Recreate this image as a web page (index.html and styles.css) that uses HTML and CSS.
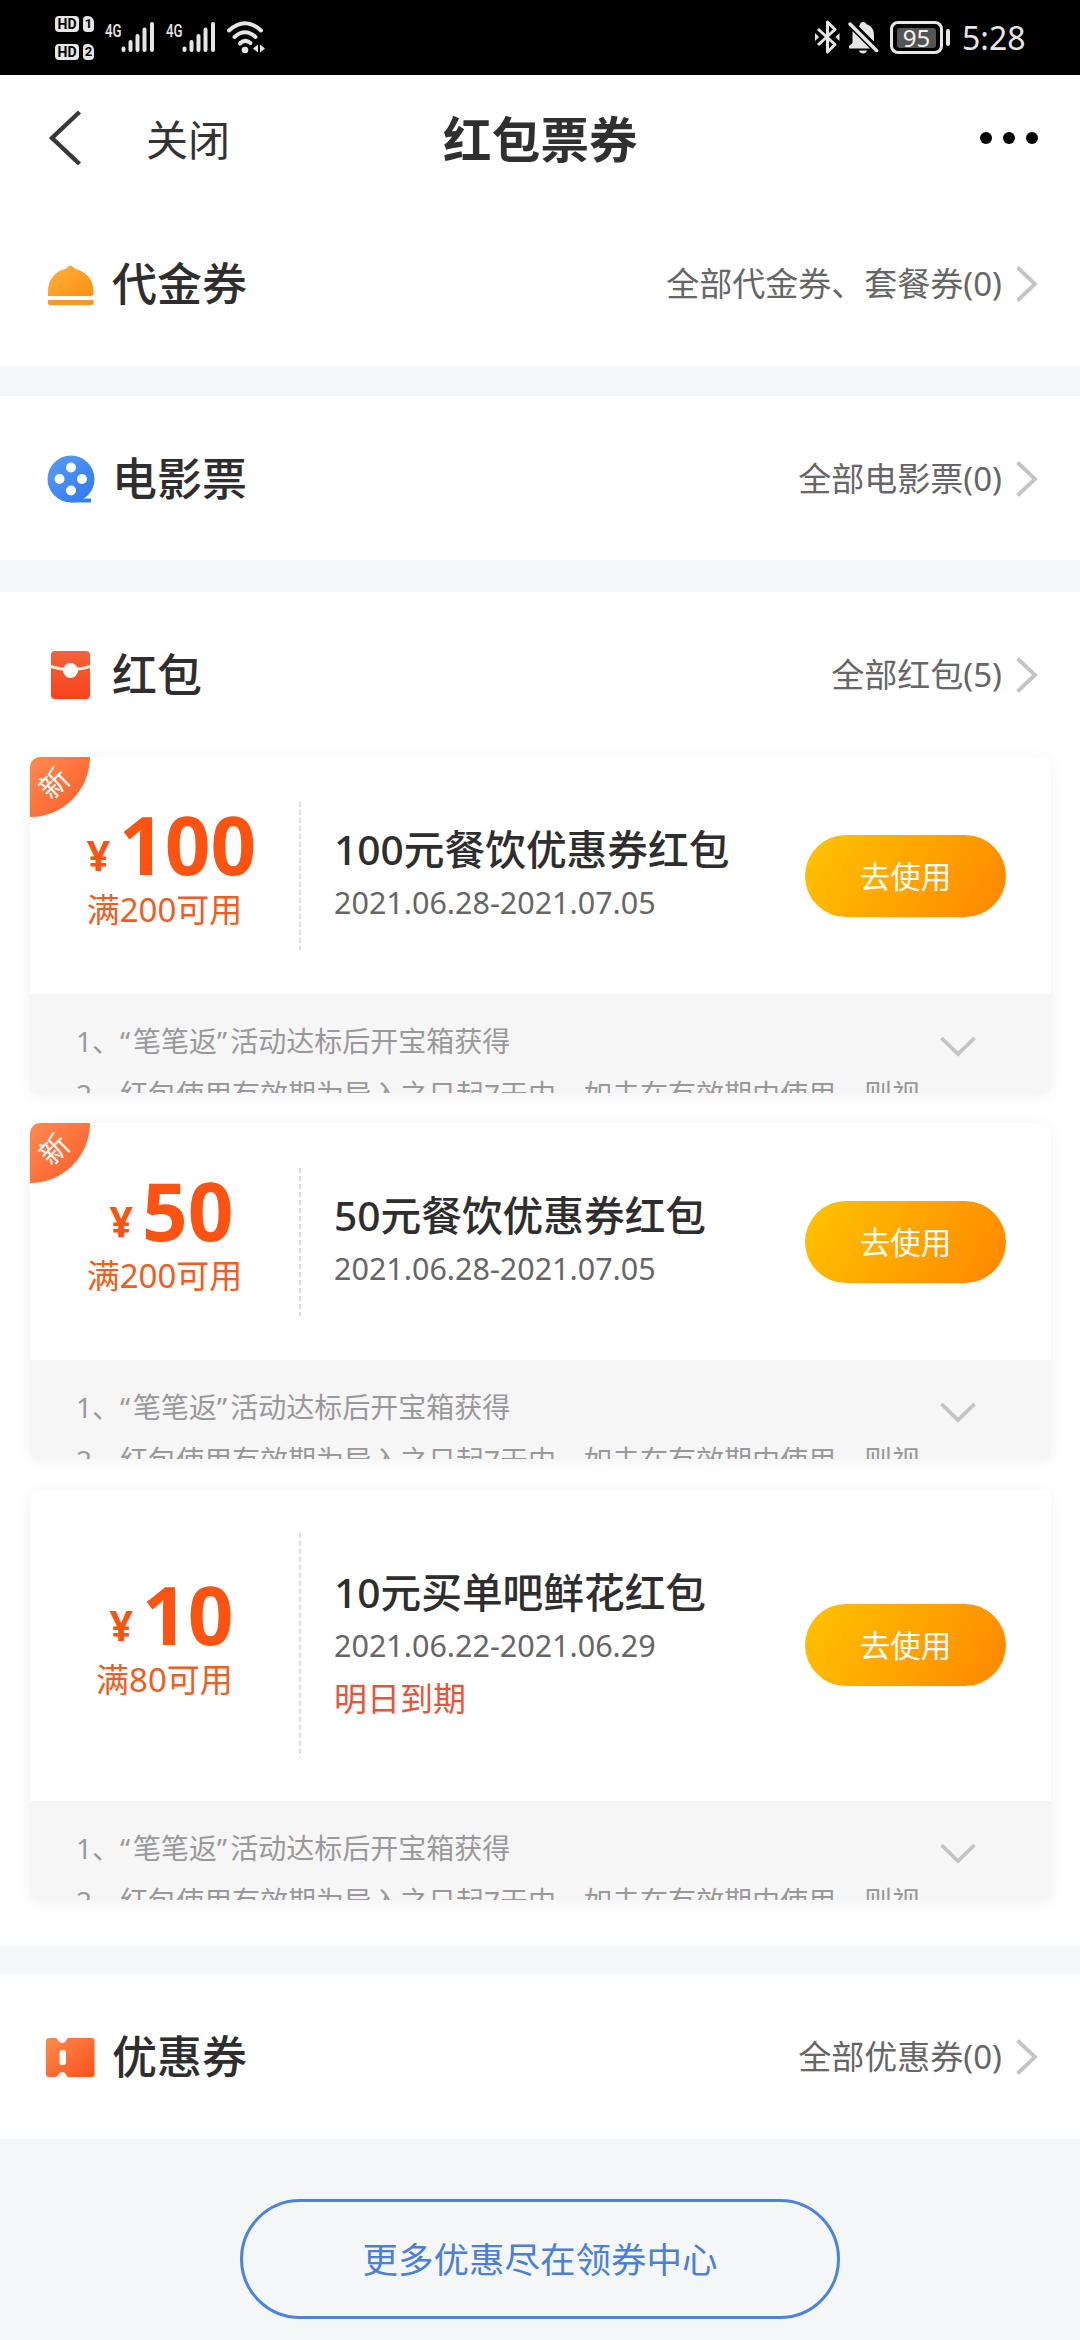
FILE: index.html
```html
<!DOCTYPE html>
<html lang="zh-CN">
<head>
<meta charset="utf-8">
<title>红包票券</title>
<link rel="stylesheet" href="styles.css">
</head>
<body>
<svg class="defs" width="0" height="0" aria-hidden="true">
  <defs>
    <linearGradient id="gold" x1="0" y1="0" x2="1" y2="1"><stop offset="0" stop-color="#ffb13d"/><stop offset="1" stop-color="#fb9010"/></linearGradient>
    <linearGradient id="blue" x1="0" y1="0" x2="1" y2="1"><stop offset="0" stop-color="#5a9cf8"/><stop offset="1" stop-color="#2b78ee"/></linearGradient>
    <linearGradient id="red" x1="0" y1="0" x2="0" y2="1"><stop offset="0" stop-color="#f4623c"/><stop offset="1" stop-color="#fa421a"/></linearGradient>
    <linearGradient id="orange" x1="0" y1="0" x2="1" y2="1"><stop offset="0" stop-color="#ff8b4a"/><stop offset="1" stop-color="#f9501f"/></linearGradient>
    <symbol id="chevron" viewBox="0 0 22 36"><path d="M1.5 1.5 19 18 1.5 34.500" fill="none" stroke="#c4c4c4" stroke-width="3.800"/></symbol>
    <symbol id="expand" viewBox="0 0 36 22"><path d="M1.500 2 18 18 34.500 2" fill="none" stroke="#c4c4c4" stroke-width="3.800"/></symbol>
    <symbol id="signal" viewBox="0 0 34 32"><path d="M2.500 27.500v1.500M9.500 21v8M16.500 15v14M23.500 8.500V29M31 3v26" fill="none" stroke="#e6e6e6" stroke-width="4" stroke-linecap="round"/></symbol>
  </defs>
</svg>

<header class="status">
  <div class="sims">
    <div class="sim"><span class="hd">HD</span><span class="slot">1</span></div>
    <div class="sim"><span class="hd">HD</span><span class="slot">2</span></div>
  </div>
  <div class="net"><span class="gen">4G</span><svg width="34" height="32"><use href="#signal"/></svg></div>
  <div class="net"><span class="gen">4G</span><svg width="34" height="32"><use href="#signal"/></svg></div>
  <svg class="wifi" width="39" height="33" viewBox="0 0 39 33">
    <g fill="none" stroke="#e6e6e6" stroke-width="4" stroke-linecap="round"><path d="M2 9.500Q18 -5 34 9.500"/><path d="M7.500 16Q18 6.500 28.500 16"/><path d="M13 22.500Q18 17.500 23.500 22"/></g>
    <circle cx="18" cy="29" r="3.300" fill="#e6e6e6"/><path d="M31 23.500v8l-5-4zM33 23.500v8l5-4z" fill="#e6e6e6"/>
  </svg>
  <div class="status-right">
    <svg width="25" height="36" viewBox="0 0 25 36"><path d="M3 10 20 25.500 12.500 33V3L20 10.500 3 26" fill="none" stroke="#e6e6e6" stroke-width="3" stroke-linejoin="round"/><path d="M0 14v8l4-4zM24.500 14v8l-4-4z" fill="#e6e6e6"/></svg>
    <svg class="bell" width="31" height="34" viewBox="0 0 31 34"><path d="M15 1c2 0 3 1 3.500 2.200C24 5 26 9 26 14v6.500L11 5.500C12 4 12 1 15 1zM4.500 10 22 27.500H1v-2.500l3.500-3z" fill="#e6e6e6"/><path d="M11 29.500h8c-.5 4-7.500 4-8 0z" fill="#e6e6e6"/><path d="M2 3 28.500 29.500" stroke="#e6e6e6" stroke-width="3.500" stroke-linecap="round"/></svg>
    <div class="battery"><span class="charge">95</span></div>
    <time class="clock">5:28</time>
  </div>
</header>

<nav class="nav">
  <svg class="back" width="33" height="56" viewBox="0 0 33 56"><path d="M30.500 2 3 28 30.500 54" fill="none" stroke="#383838" stroke-width="4.400"/></svg>
  <span class="close">关闭</span>
  <h1 class="title">红包票券</h1>
  <div class="more"><i></i><i></i><i></i></div>
</nav>

<main>
  <section class="group">
    <div class="row">
      <svg class="icon" width="48" height="48" viewBox="0 0 48 48"><path d="M1 36v-5C1 20 8 11 18 9c2-.5 3-3.500 5.500-3.500S27 8.500 29 9C39 11.500 46.500 20 46.500 31v2q0 3-3 3z" fill="url(#gold)"/><path d="M1 40h45.500v3q0 2-2 2H3q-2 0-2-2z" fill="#f39a2a"/></svg>
      <h2>代金券</h2><span class="all">全部代金券、套餐券(0)</span><svg width="22" height="36"><use href="#chevron"/></svg>
    </div>
  </section>

  <section class="group movies">
    <div class="row">
      <svg class="icon" width="48" height="48" viewBox="0 0 48 48"><circle cx="24" cy="24" r="23.500" fill="url(#blue)"/><path d="M24 43.500h20v4H24z" fill="#3a80ea"/><g fill="#fff"><circle cx="24" cy="12.500" r="5"/><circle cx="24" cy="35.500" r="5"/><circle cx="12.500" cy="24" r="5"/><circle cx="35" cy="24" r="5"/></g></svg>
      <h2>电影票</h2><span class="all">全部电影票(0)</span><svg width="22" height="36"><use href="#chevron"/></svg>
    </div>
  </section>

  <section class="group packets">
    <div class="row">
      <svg class="icon" width="48" height="48" viewBox="0 0 48 48"><rect x="4" width="39" height="48" rx="4" fill="url(#red)"/><path d="M4 15.500Q23 22 43 15.500" fill="none" stroke="#ffeadb" stroke-width="3"/><circle cx="23.500" cy="19.500" r="7.500" fill="#fff"/></svg>
      <h2>红包</h2><span class="all">全部红包(5)</span><svg width="22" height="36"><use href="#chevron"/></svg>
    </div>

    <div class="cards">
      <article class="card">
        <span class="tag"><b>新</b></span>
        <div class="main">
          <div class="value"><p class="amount"><small>¥</small>100</p><p class="limit">满200可用</p></div>
          <svg class="rule" width="2"><path d="M1 0V230" stroke="#dedede" stroke-width="2" stroke-dasharray="5 3"/></svg>
          <div class="info"><h3>100元餐饮优惠券红包</h3><p class="date">2021.06.28-2021.07.05</p></div>
          <button class="use">去使用</button>
        </div>
        <div class="notes"><div class="lines"><p>1、<span class="quote">“</span>笔笔返<span class="quote">”</span>活动达标后开宝箱获得</p><p>2、红包使用有效期为导入之日起7天内，如未在有效期内使用，则视</p></div><svg class="toggle" width="36" height="22"><use href="#expand"/></svg></div>
      </article>

      <article class="card">
        <span class="tag"><b>新</b></span>
        <div class="main">
          <div class="value"><p class="amount"><small>¥</small>50</p><p class="limit">满200可用</p></div>
          <svg class="rule" width="2"><path d="M1 0V230" stroke="#dedede" stroke-width="2" stroke-dasharray="5 3"/></svg>
          <div class="info"><h3>50元餐饮优惠券红包</h3><p class="date">2021.06.28-2021.07.05</p></div>
          <button class="use">去使用</button>
        </div>
        <div class="notes"><div class="lines"><p>1、<span class="quote">“</span>笔笔返<span class="quote">”</span>活动达标后开宝箱获得</p><p>2、红包使用有效期为导入之日起7天内，如未在有效期内使用，则视</p></div><svg class="toggle" width="36" height="22"><use href="#expand"/></svg></div>
      </article>

      <article class="card tall">
        <div class="main">
          <div class="value"><p class="amount"><small>¥</small>10</p><p class="limit">满80可用</p></div>
          <svg class="rule" width="2"><path d="M1 0V230" stroke="#dedede" stroke-width="2" stroke-dasharray="5 3"/></svg>
          <div class="info"><h3>10元买单吧鲜花红包</h3><p class="date">2021.06.22-2021.06.29</p><p class="expiry">明日到期</p></div>
          <button class="use">去使用</button>
        </div>
        <div class="notes"><div class="lines"><p>1、<span class="quote">“</span>笔笔返<span class="quote">”</span>活动达标后开宝箱获得</p><p>2、红包使用有效期为导入之日起7天内，如未在有效期内使用，则视</p></div><svg class="toggle" width="36" height="22"><use href="#expand"/></svg></div>
      </article>
    </div>
  </section>

  <section class="group">
    <div class="row">
      <svg class="icon" width="48" height="48" viewBox="0 0 48 48"><path d="M2 5h7c2 1 3 5 6.500 5S19 6 21 5h23.500q3 0 3 3v33q0 3-3 3H21c-2-1-2-5-5.500-5S11 43 9 44H2q-3 0-3-3V8q0-3 3-3z" fill="url(#orange)"/><rect x="12.500" y="17" width="6.500" height="15" rx="2.500" fill="#fff"/></svg>
      <h2>优惠券</h2><span class="all">全部优惠券(0)</span><svg width="22" height="36"><use href="#chevron"/></svg>
    </div>
  </section>
</main>

<footer class="footer"><button class="center-link">更多优惠尽在领券中心</button></footer>
</body>
</html>
```

FILE: styles.css
```css
* { box-sizing: border-box; margin: 0; padding: 0; }

body {
  width: 1080px;
  height: 2340px;
  overflow: hidden;
  background: #f5f6f7;
  color: #2e2e2e;
  font-family: "Noto Sans", "Noto Sans CJK SC", sans-serif;
}

svg { display: block; flex: none; overflow: visible; }
.defs { position: absolute; }
button { border: 0; font-family: inherit; }

/* System status bar */
.status {
  display: flex;
  align-items: flex-start;
  height: 75px;
  padding: 16px 56px 0 55px;
  background: #000;
  color: #e6e6e6;
}
.sims { display: flex; flex-direction: column; gap: 12px; width: 50px; }
.sim { display: flex; gap: 4px; height: 16px; }
.hd, .slot {
  border-radius: 4px;
  background: #e6e6e6;
  color: #000;
  font: bold 14px/16px Roboto, sans-serif;
  text-align: center;
}
.hd { width: 24px; }
.slot { width: 11px; border-top-right-radius: 6px; font-size: 13px; }
.net { display: flex; width: 61px; padding-top: 5px; }
.gen {
  width: 16px;
  font: 500 19px/20px "Roboto", sans-serif;
  transform: scaleX(.7);
  transform-origin: 0 0;
}
.wifi { margin-top: 5px; }
.status-right { display: flex; align-items: flex-start; margin-left: auto; padding-top: 3px; }
.bell { margin: 2px 0 0 8px; }
.battery {
  position: relative;
  width: 53px;
  height: 33px;
  margin: 2px 0 0 11px;
  padding: 4px;
  border: 3px solid #e6e6e6;
  border-radius: 8px;
}
.battery::after {
  content: "";
  position: absolute;
  top: 5px;
  right: -10px;
  width: 4px;
  height: 17px;
  border-radius: 2px;
  background: #e6e6e6;
}
.charge {
  display: block;
  width: 39px;
  height: 20px;
  border-radius: 3px;
  background: #555;
  color: #f2f2f2;
  font-size: 24px;
  line-height: 20px;
  text-align: center;
}
.clock { margin-left: 19px; width: 62px; font-size: 32px; line-height: 38px; white-space: nowrap; }

/* Page navigation */
.nav {
  display: grid;
  grid-template-columns: 97px 297px 1fr 60px;
  align-items: center;
  height: 126px;
  padding: 0 42px 0 49px;
  background: #fff;
}
.close { color: #333; font-size: 42px; line-height: 50px; padding-top: 4px; }
.title { font-size: 48.500px; line-height: 50px; padding-top: 2px; color: #303030; letter-spacing: .2px; }
.more { display: flex; gap: 11px; justify-content: flex-end; }
.more i { width: 12px; height: 12px; border-radius: 50%; background: #000; }

/* Ticket groups */
.group { margin-bottom: 30px; background: #fff; }
.movies { margin-bottom: 32px; padding-top: 2px; }
.row { display: flex; align-items: center; height: 165px; padding: 0 42px 0 47px; }
.movies .row { height: 162px; }
.row h2 { margin-left: 17px; font-size: 45px; font-weight: 500; line-height: 60px; }
.all { margin: 0 14px 0 auto; color: #666; font-size: 33px; line-height: 44px; }
.packets { margin-bottom: 28px; padding-bottom: 46px; }

/* Red packet cards */
.cards { display: flex; flex-direction: column; gap: 30px; padding: 0 29px 0 30px; }
.card { position: relative; box-shadow: 0 2px 16px rgba(0, 0, 0, .06); border-radius: 10px; }
.tag {
  position: absolute;
  top: 0;
  left: 0;
  width: 60px;
  height: 60px;
  border-radius: 10px 0 60px 0;
  background: linear-gradient(135deg, #ff8a50, #fa5a28);
  color: #fff;
}
.tag b {
  display: block;
  width: 48px;
  font-size: 29px;
  font-weight: 400;
  line-height: 52px;
  text-align: center;
  transform: rotate(-45deg);
}
.main { display: flex; align-items: center; height: 237px; border-radius: 10px 10px 0 0; background: #fff; }
.value { width: 269px; color: #fb5311; text-align: center; }
.amount { height: 69px; padding-left: 14px; font-size: 80px; font-weight: 700; line-height: 69px; }
.amount small { margin-right: 9px; font-size: 41px; line-height: 1; vertical-align: 4px; }
.limit { font-size: 33px; line-height: 64px; color: #ee5e1e; }
.rule { height: 148px; overflow: hidden; }
.info { width: 504px; padding-left: 33px; white-space: nowrap; }
.info h3 { font-size: 40.700px; font-weight: 500; line-height: 53px; }
.date { color: #666; font-size: 30.500px; line-height: 53px; }
.expiry { color: #e9533a; font-size: 33px; line-height: 53px; }
.use {
  width: 201px;
  height: 82px;
  border-radius: 41px;
  background: linear-gradient(120deg, #ffc400, #ff8600);
  color: #fff;
  font-size: 30.500px;
  line-height: 82px;
}
.notes {
  display: flex;
  justify-content: space-between;
  height: 99px;
  padding: 21px 75px 0 46px;
  overflow: hidden;
  border-radius: 0 0 6px 6px;
  background: #f6f6f6;
  color: #999;
}
.lines { font-size: 28px; line-height: 53px; white-space: nowrap; }
.quote { letter-spacing: 3px; }
.toggle { margin-top: 21px; }
.tall .main { height: 312px; }
.tall .rule { height: 225px; }

/* Coupon centre link */
.footer { display: flex; justify-content: center; padding-top: 30px; }
.center-link {
  width: 600px;
  height: 120px;
  border: 3px solid #4c84dc;
  border-radius: 60px;
  background: transparent;
  color: #4a80d8;
  font-size: 35.500px;
  line-height: 112px;
}
```
